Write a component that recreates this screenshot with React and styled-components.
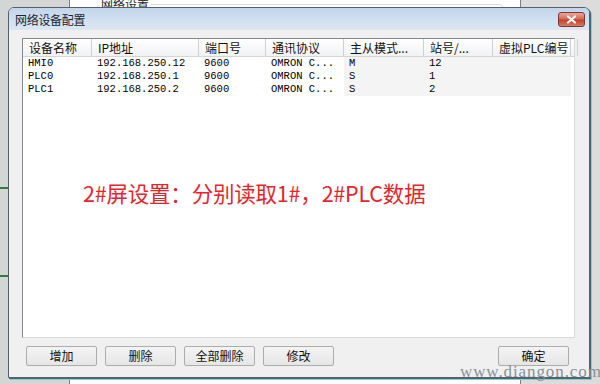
import styled, { createGlobalStyle } from "styled-components";

const GlobalStyle = createGlobalStyle`
  html, body {
    margin: 0;
    padding: 0;
  }
  body {
    width: 600px;
    height: 384px;
    overflow: hidden;
    font-family: "Noto Sans CJK SC", "Liberation Sans", sans-serif;
  }
`;

const COLS = "69px 107px 67px 78px 80px 69px 78px 1fr";

const columns = ["设备名称", "IP地址", "端口号", "通讯协议", "主从模式...", "站号/...", "虚拟PLC编号", ""];

const devices = [
  { name: "HMI0", ip: "192.168.250.12", port: "9600", proto: "OMRON C...", mode: "M", station: "12" },
  { name: "PLC0", ip: "192.168.250.1", port: "9600", proto: "OMRON C...", mode: "S", station: "1" },
  { name: "PLC1", ip: "192.168.250.2", port: "9600", proto: "OMRON C...", mode: "S", station: "2" },
];

const App = () => {
  return (
    <>
      <GlobalStyle />
      <Desktop>
        <SideColumn />
        <MainColumn>
          <GroupBox>
            <legend>网络设置</legend>
          </GroupBox>
        </MainColumn>
        <SideColumn $right />
        <Tick style={{ top: 187 }} />
        <Tick style={{ top: 275 }} />

        <Dialog>
          <TitleBar>
            <Title>网络设备配置</Title>
            <CloseButton aria-label="close">
              <svg width="11" height="9" viewBox="0 0 11 9">
                <path d="M2 1.5 L9 7.5 M9 1.5 L2 7.5" stroke="#fff" strokeWidth="2.2" strokeLinecap="round" />
              </svg>
            </CloseButton>
          </TitleBar>
          <Body>
            <ListBox>
              <HeaderRow>
                {columns.map((c, i) => (
                  <HeaderCell key={i}>{c}</HeaderCell>
                ))}
              </HeaderRow>
              {devices.map((d) => (
                <Row key={d.name}>
                  <Cell>{d.name}</Cell>
                  <Cell>{d.ip}</Cell>
                  <Cell>{d.port}</Cell>
                  <Cell>{d.proto}</Cell>
                  <Cell $shade>{d.mode}</Cell>
                  <Cell $shade>{d.station}</Cell>
                  <Cell $shade />
                  <Cell />
                </Row>
              ))}
              <Note>2#屏设置：分别读取1#，2#PLC数据</Note>
            </ListBox>
            <ButtonRow>
              <Button>增加</Button>
              <Button>删除</Button>
              <Button>全部删除</Button>
              <Button>修改</Button>
              <Spacer />
              <Button>确定</Button>
            </ButtonRow>
          </Body>
        </Dialog>
        <Watermark>www.diangon.com</Watermark>
      </Desktop>
    </>
  );
};

const Desktop = styled.div`
  position: relative;
  width: 600px;
  height: 384px;
  display: grid;
  grid-template-columns: 70px 450px 80px;
  background: #fff;
`;

const SideColumn = styled.div`
  background: ${(p) => (p.$right ? "#dcdcdc" : "#d3d6d4")};
  border-left: ${(p) => (p.$right ? "1px solid #7d7d7d" : "none")};
  border-right: ${(p) => (p.$right ? "none" : "1px solid #7d7d7d")};
`;

const MainColumn = styled.div`
  background: #fff;
  padding: 0 16px 0 26px;
`;

const GroupBox = styled.fieldset`
  margin: -1px 0 0;
  height: 200px;
  border: 1px solid #d5dde3;
  border-radius: 5px;
  padding: 0;

  legend {
    font-size: 12px;
    line-height: 10px;
    color: #222;
    padding: 0 2px;
    margin-left: 2px;
  }
`;

const Tick = styled.div`
  position: absolute;
  left: 0;
  width: 8px;
  height: 2px;
  background: #2f7d3b;
`;

const Dialog = styled.div`
  position: absolute;
  left: 8px;
  top: 7px;
  width: 580px;
  height: 369px;
  display: flex;
  flex-direction: column;
  background: #f0f0f0;
  border: 1px solid #55606b;
  border-radius: 6px 6px 0 0;
  box-shadow: 1px 1px 0 #3c6f7a, 2px 2px 0 #9fc3cc;
`;

const TitleBar = styled.div`
  height: 22px;
  flex-shrink: 0;
  display: flex;
  align-items: center;
  justify-content: space-between;
  padding: 0 4px 0 6px;
  border-radius: 5px 5px 0 0;
  background: linear-gradient(#c2d5eb, #d3e1f0 60%, #dbe6f2);
`;

const Title = styled.div`
  font-size: 12px;
  color: #1c2633;
  letter-spacing: -0.3px;
`;

const CloseButton = styled.div`
  width: 27px;
  height: 15px;
  margin-top: 1px;
  display: flex;
  align-items: center;
  justify-content: center;
  border: 1px solid #7e3a30;
  border-radius: 3px;
  box-sizing: border-box;
  background: linear-gradient(#e8a89a, #d46a56 45%, #c2412c 55%, #d87a60);
`;

const Body = styled.div`
  flex: 1;
  display: flex;
  flex-direction: column;
  padding: 8px 14px 12px 13px;
`;

const ListBox = styled.div`
  height: 300px;
  box-sizing: border-box;
  background: #fff;
  border: 1px solid #828790;
  border-right-color: #d9d9d9;
  border-bottom-color: #d9d9d9;
  display: flex;
  flex-direction: column;
`;

const HeaderRow = styled.div`
  display: grid;
  grid-template-columns: ${COLS};
  height: 17px;
  background: linear-gradient(#ffffff, #f1f2f4);
  border-bottom: 1px solid #d5d5d5;
`;

const HeaderCell = styled.div`
  font-size: 12px;
  line-height: 17px;
  padding-left: 6px;
  color: #111;
  white-space: nowrap;
  overflow: hidden;
  border-right: 1px solid #cfcfcf;
`;

const Row = styled.div`
  display: grid;
  grid-template-columns: ${COLS};
  height: 13px;
`;

const Cell = styled.div`
  font-family: "Liberation Mono", "DejaVu Sans Mono", monospace;
  font-size: 10.5px;
  line-height: 13px;
  padding-left: 5px;
  color: #000;
  white-space: nowrap;
  background: ${(p) => (p.$shade ? "#f4f4f4" : "transparent")};
`;

const Note = styled.div`
  margin: 82px 0 0 60px;
  font-size: 21.5px;
  line-height: 30px;
  color: #e2262d;
  letter-spacing: -0.2px;
`;

const ButtonRow = styled.div`
  display: flex;
  gap: 8px;
  margin-top: 8px;
  padding: 0 6px 0 4px;
`;

const Spacer = styled.div`
  flex: 1;
`;

const Button = styled.div`
  width: 71px;
  height: 20px;
  box-sizing: border-box;
  border: 1px solid #acacac;
  border-radius: 2px;
  background: linear-gradient(#f4f4f4, #e6e6e6);
  font-size: 12px;
  line-height: 18px;
  text-align: center;
  color: #111;
`;

const Watermark = styled.div`
  position: absolute;
  left: 460px;
  top: 362px;
  font-family: "Liberation Serif", "DejaVu Serif", serif;
  font-size: 17px;
  line-height: 20px;
  letter-spacing: 0.9px;
  color: #87919a;
`;

export default App;
